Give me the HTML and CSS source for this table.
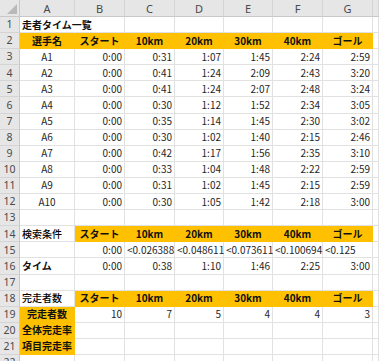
FILE: index.html
```html
<!DOCTYPE html>
<html lang="ja">
<head>
<meta charset="utf-8">
<title>走者タイム一覧</title>
<link rel="stylesheet" href="styles.css">
</head>
<body>
<div class="sheet">
  <div class="corner"></div><div class="h">A</div><div class="h">B</div><div class="h">C</div><div class="h">D</div><div class="h">E</div><div class="h">F</div><div class="h">G</div><div class="h"></div>

  <div class="r">1</div><div class="c t b nr">走者タイム一覧</div><div class="c"></div><div class="c"></div><div class="c"></div><div class="c"></div><div class="c"></div><div class="c"></div><div class="c"></div>

  <div class="r">2</div><div class="c o m b">選手名</div><div class="c o m b">スタート</div><div class="c o m b">10km</div><div class="c o m b">20km</div><div class="c o m b">30km</div><div class="c o m b">40km</div><div class="c o m b">ゴール</div><div class="c"></div>

  <div class="r">3</div><div class="c m">A1</div><div class="c n">0:00</div><div class="c n">0:31</div><div class="c n">1:07</div><div class="c n">1:45</div><div class="c n">2:24</div><div class="c n">2:59</div><div class="c"></div>
  <div class="r">4</div><div class="c m">A2</div><div class="c n">0:00</div><div class="c n">0:41</div><div class="c n">1:24</div><div class="c n">2:09</div><div class="c n">2:43</div><div class="c n">3:20</div><div class="c"></div>
  <div class="r">5</div><div class="c m">A3</div><div class="c n">0:00</div><div class="c n">0:41</div><div class="c n">1:24</div><div class="c n">2:07</div><div class="c n">2:48</div><div class="c n">3:24</div><div class="c"></div>
  <div class="r">6</div><div class="c m">A4</div><div class="c n">0:00</div><div class="c n">0:30</div><div class="c n">1:12</div><div class="c n">1:52</div><div class="c n">2:34</div><div class="c n">3:05</div><div class="c"></div>
  <div class="r">7</div><div class="c m">A5</div><div class="c n">0:00</div><div class="c n">0:35</div><div class="c n">1:14</div><div class="c n">1:45</div><div class="c n">2:30</div><div class="c n">3:02</div><div class="c"></div>
  <div class="r">8</div><div class="c m">A6</div><div class="c n">0:00</div><div class="c n">0:30</div><div class="c n">1:02</div><div class="c n">1:40</div><div class="c n">2:15</div><div class="c n">2:46</div><div class="c"></div>
  <div class="r">9</div><div class="c m">A7</div><div class="c n">0:00</div><div class="c n">0:42</div><div class="c n">1:17</div><div class="c n">1:56</div><div class="c n">2:35</div><div class="c n">3:10</div><div class="c"></div>
  <div class="r">10</div><div class="c m">A8</div><div class="c n">0:00</div><div class="c n">0:33</div><div class="c n">1:04</div><div class="c n">1:48</div><div class="c n">2:22</div><div class="c n">2:59</div><div class="c"></div>
  <div class="r">11</div><div class="c m">A9</div><div class="c n">0:00</div><div class="c n">0:31</div><div class="c n">1:02</div><div class="c n">1:45</div><div class="c n">2:15</div><div class="c n">2:59</div><div class="c"></div>
  <div class="r">12</div><div class="c m">A10</div><div class="c n">0:00</div><div class="c n">0:30</div><div class="c n">1:05</div><div class="c n">1:42</div><div class="c n">2:18</div><div class="c n">3:00</div><div class="c"></div>

  <div class="r">13</div><div class="c"></div><div class="c"></div><div class="c"></div><div class="c"></div><div class="c"></div><div class="c"></div><div class="c"></div><div class="c"></div>

  <div class="r">14</div><div class="c t dk">検索条件</div><div class="c o m b">スタート</div><div class="c o m b">10km</div><div class="c o m b">20km</div><div class="c o m b">30km</div><div class="c o m b">40km</div><div class="c o m b">ゴール</div><div class="c"></div>

  <div class="r">15</div><div class="c"></div><div class="c n">0:00</div><div class="c t">&lt;0.026388</div><div class="c t">&lt;0.048611</div><div class="c t">&lt;0.073611</div><div class="c t">&lt;0.100694</div><div class="c t">&lt;0.125</div><div class="c"></div>

  <div class="r">16</div><div class="c t b">タイム</div><div class="c n">0:00</div><div class="c n">0:38</div><div class="c n">1:10</div><div class="c n">1:46</div><div class="c n">2:25</div><div class="c n">3:00</div><div class="c"></div>

  <div class="r">17</div><div class="c"></div><div class="c"></div><div class="c"></div><div class="c"></div><div class="c"></div><div class="c"></div><div class="c"></div><div class="c"></div>

  <div class="r">18</div><div class="c t dk">完走者数</div><div class="c o m b">スタート</div><div class="c o m b">10km</div><div class="c o m b">20km</div><div class="c o m b">30km</div><div class="c o m b">40km</div><div class="c o m b">ゴール</div><div class="c"></div>

  <div class="r">19</div><div class="c o m b">完走者数</div><div class="c n">10</div><div class="c n">7</div><div class="c n">5</div><div class="c n">4</div><div class="c n">4</div><div class="c n">3</div><div class="c"></div>
  <div class="r">20</div><div class="c o m b">全体完走率</div><div class="c"></div><div class="c"></div><div class="c"></div><div class="c"></div><div class="c"></div><div class="c"></div><div class="c"></div>
  <div class="r">21</div><div class="c o m b">項目完走率</div><div class="c"></div><div class="c"></div><div class="c"></div><div class="c"></div><div class="c"></div><div class="c"></div><div class="c"></div>
  <div class="r">22</div><div class="c"></div><div class="c"></div><div class="c"></div><div class="c"></div><div class="c"></div><div class="c"></div><div class="c"></div><div class="c"></div>
</div>
</body>
</html>
```

FILE: styles.css
```css
html, body {
  margin: 0;
  padding: 0;
  background: #ffffff;
  overflow: hidden;
}

.sheet {
  display: grid;
  grid-template-columns: 20px 55px 50px 50px 49px 49px 50px 50px 1fr;
  grid-template-rows: 17px repeat(22, 16.1px);
  font-family: "Noto Sans CJK JP", "Noto Sans", sans-serif;
  font-size: 10px;
  color: #262626;
}

.sheet > div {
  box-sizing: border-box;
  display: flex;
  align-items: center;
  white-space: nowrap;
  min-width: 0;
  line-height: 1;
}

.corner {
  background: #e6e6e6;
  border-right: 1px solid #c8c8c8;
  border-bottom: 1px solid #c8c8c8;
  justify-content: flex-end;
  align-items: flex-end !important;
  padding: 0 2px 2px 0;
}

.corner::after {
  content: "";
  width: 10px;
  height: 10px;
  background: #b9b9b9;
  clip-path: polygon(100% 0, 100% 100%, 0 100%);
}

.h {
  background: #e6e6e6;
  color: #4a4a4a;
  font-family: "Noto Sans", "Liberation Sans", sans-serif;
  font-size: 11px;
  justify-content: center;
  border-right: 1px solid #d4d4d4;
  border-bottom: 1px solid #c8c8c8;
}

.r {
  background: #e6e6e6;
  color: #4a4a4a;
  font-family: "Noto Sans", "Liberation Sans", sans-serif;
  font-size: 10.5px;
  justify-content: center;
  border-right: 1px solid #c8c8c8;
  border-bottom: 1px solid #d4d4d4;
}

.c {
  border-right: 1px solid #e1e1e1;
  border-bottom: 1px solid #e1e1e1;
  padding: 0 2px;
  overflow: visible;
}

.c.nr {
  border-right-color: transparent;
}

.o {
  background: #ffc000;
  border-right-color: #ffc000;
  border-bottom-color: #ffc000;
  color: #111111;
}

.b {
  font-weight: 700;
  color: #111111;
}

.dk {
  color: #000000;
  font-weight: 500;
}

.t {
  justify-content: flex-start;
}

.n {
  justify-content: flex-end;
}

.m {
  justify-content: center;
}
```
